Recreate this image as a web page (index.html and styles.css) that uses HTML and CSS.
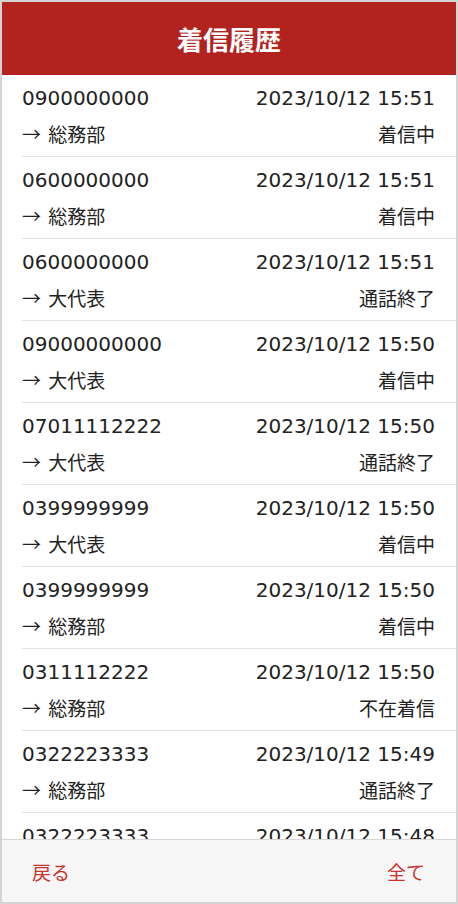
FILE: index.html
```html
<!DOCTYPE html>
<html lang="ja">
<head>
    <meta charset="utf-8">
    <meta name="viewport" content="width=device-width, initial-scale=1.0">
    <title>着信履歴</title>
    <link rel="stylesheet" href="styles.css">
</head>
<body>
    <div class="frame">
        <header class="title-bar">着信履歴</header>
        <ul class="call-list">
            <li class="call-item">
                <div class="line"><span>0900000000</span><span>2023/10/12 15:51</span></div>
                <div class="line sub"><span><span class="arrow">→</span> 総務部</span><span>着信中</span></div>
            </li>
            <li class="call-item">
                <div class="line"><span>0600000000</span><span>2023/10/12 15:51</span></div>
                <div class="line sub"><span><span class="arrow">→</span> 総務部</span><span>着信中</span></div>
            </li>
            <li class="call-item">
                <div class="line"><span>0600000000</span><span>2023/10/12 15:51</span></div>
                <div class="line sub"><span><span class="arrow">→</span> 大代表</span><span>通話終了</span></div>
            </li>
            <li class="call-item">
                <div class="line"><span>09000000000</span><span>2023/10/12 15:50</span></div>
                <div class="line sub"><span><span class="arrow">→</span> 大代表</span><span>着信中</span></div>
            </li>
            <li class="call-item">
                <div class="line"><span>07011112222</span><span>2023/10/12 15:50</span></div>
                <div class="line sub"><span><span class="arrow">→</span> 大代表</span><span>通話終了</span></div>
            </li>
            <li class="call-item">
                <div class="line"><span>0399999999</span><span>2023/10/12 15:50</span></div>
                <div class="line sub"><span><span class="arrow">→</span> 大代表</span><span>着信中</span></div>
            </li>
            <li class="call-item">
                <div class="line"><span>0399999999</span><span>2023/10/12 15:50</span></div>
                <div class="line sub"><span><span class="arrow">→</span> 総務部</span><span>着信中</span></div>
            </li>
            <li class="call-item">
                <div class="line"><span>0311112222</span><span>2023/10/12 15:50</span></div>
                <div class="line sub"><span><span class="arrow">→</span> 総務部</span><span>不在着信</span></div>
            </li>
            <li class="call-item">
                <div class="line"><span>0322223333</span><span>2023/10/12 15:49</span></div>
                <div class="line sub"><span><span class="arrow">→</span> 総務部</span><span>通話終了</span></div>
            </li>
            <li class="call-item">
                <div class="line"><span>0322223333</span><span>2023/10/12 15:48</span></div>
                <div class="line sub"><span><span class="arrow">→</span> 総務部</span><span>通話終了</span></div>
            </li>
        </ul>
        <footer class="tool-bar">
            <a class="tool-btn">戻る</a>
            <a class="tool-btn">全て</a>
        </footer>
    </div>
</body>
</html>
```
FILE: styles.css
```css
*{
    margin: 0;
    padding: 0;
    box-sizing: border-box;
}
body{
    width: 458px;
    height: 904px;
    font-family: "DejaVu Sans", "Noto Sans CJK JP", sans-serif;
    color: #222;
    background: #fff;
}
.frame{
    height: 100%;
    display: flex;
    flex-direction: column;
    border: 2px solid #d4d4d4;
}
.title-bar{
    height: 73px;
    flex-shrink: 0;
    background-color: #b2231f;
    color: #fff;
    font-family: "Noto Sans CJK JP", sans-serif;
    font-weight: 700;
    font-size: 26px;
    display: flex;
    justify-content: center;
    align-items: center;
}
.call-list{
    flex: 1;
    overflow: hidden;
    list-style: none;
    padding-left: 20px;
}
.call-item{
    padding: 8px 21px 8px 0;
    border-bottom: 1px solid #e3e3e3;
    display: flex;
    flex-direction: column;
    gap: 5px;
}
.line{
    height: 30px;
    display: flex;
    justify-content: space-between;
    align-items: center;
    font-size: 20px;
}
.sub{
    font-family: "Noto Sans CJK JP", sans-serif;
    font-size: 19px;
}
.arrow{
    margin-right: 3px;
}
.tool-bar{
    height: 63px;
    flex-shrink: 0;
    background-color: #f6f6f6;
    border-top: 1px solid #d6d6d6;
    display: flex;
    justify-content: space-between;
    align-items: center;
    padding: 0 31px 0 30px;
}
.tool-btn{
    font-family: "Noto Sans CJK JP", sans-serif;
    font-size: 19px;
    color: #c8342c;
}
```
